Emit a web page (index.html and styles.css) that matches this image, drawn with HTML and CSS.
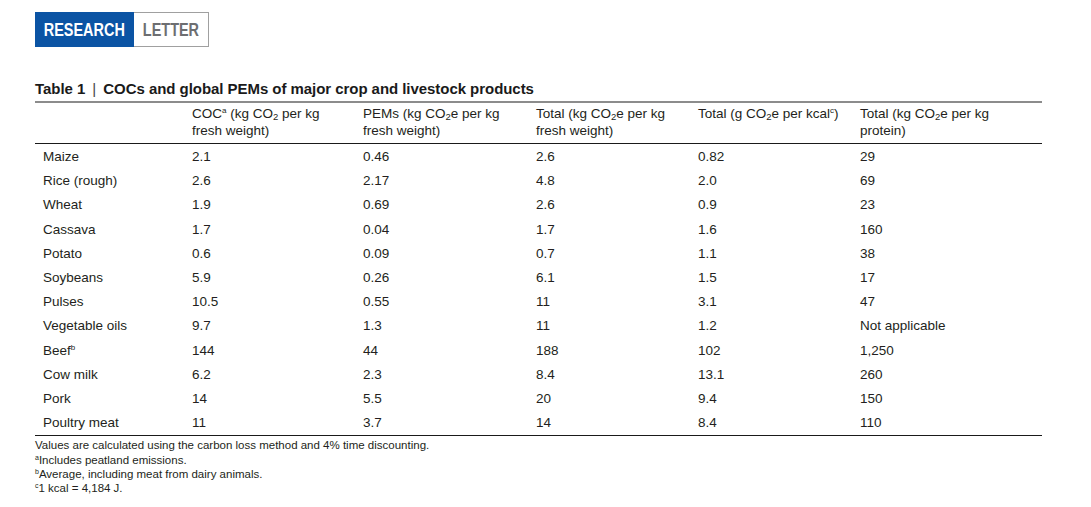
FILE: index.html
```html
<!DOCTYPE html>
<html>
<head>
<meta charset="utf-8">
<link rel="stylesheet" href="styles.css">
</head>
<body>
<div class="page">
  <div class="badge"><span class="badge-blue"><span class="cond">RESEARCH</span></span><span class="badge-white"><span class="cond">LETTER</span></span></div>
  <h1 class="title">Table 1 <span class="bar">|</span> COCs and global PEMs of major crop and livestock products</h1>
  <table class="data">
    <colgroup>
      <col class="c1"><col class="c2"><col class="c3"><col class="c4"><col class="c5"><col class="c6">
    </colgroup>
    <thead>
      <tr>
        <th></th>
        <th>COC<sup>a</sup> (kg CO<sub>2</sub> per kg<br>fresh weight)</th>
        <th>PEMs (kg CO<sub>2</sub>e per kg<br>fresh weight)</th>
        <th>Total (kg CO<sub>2</sub>e per kg<br>fresh weight)</th>
        <th>Total (g CO<sub>2</sub>e per kcal<sup>c</sup>)</th>
        <th>Total (kg CO<sub>2</sub>e per kg<br>protein)</th>
      </tr>
    </thead>
    <tbody>
      <tr><td>Maize</td><td>2.1</td><td>0.46</td><td>2.6</td><td>0.82</td><td>29</td></tr>
      <tr><td>Rice (rough)</td><td>2.6</td><td>2.17</td><td>4.8</td><td>2.0</td><td>69</td></tr>
      <tr><td>Wheat</td><td>1.9</td><td>0.69</td><td>2.6</td><td>0.9</td><td>23</td></tr>
      <tr><td>Cassava</td><td>1.7</td><td>0.04</td><td>1.7</td><td>1.6</td><td>160</td></tr>
      <tr><td>Potato</td><td>0.6</td><td>0.09</td><td>0.7</td><td>1.1</td><td>38</td></tr>
      <tr><td>Soybeans</td><td>5.9</td><td>0.26</td><td>6.1</td><td>1.5</td><td>17</td></tr>
      <tr><td>Pulses</td><td>10.5</td><td>0.55</td><td>11</td><td>3.1</td><td>47</td></tr>
      <tr><td>Vegetable oils</td><td>9.7</td><td>1.3</td><td>11</td><td>1.2</td><td>Not applicable</td></tr>
      <tr><td>Beef<sup>b</sup></td><td>144</td><td>44</td><td>188</td><td>102</td><td>1,250</td></tr>
      <tr><td>Cow milk</td><td>6.2</td><td>2.3</td><td>8.4</td><td>13.1</td><td>260</td></tr>
      <tr><td>Pork</td><td>14</td><td>5.5</td><td>20</td><td>9.4</td><td>150</td></tr>
      <tr><td>Poultry meat</td><td>11</td><td>3.7</td><td>14</td><td>8.4</td><td>110</td></tr>
    </tbody>
  </table>
  <div class="notes">
    <p>Values are calculated using the carbon loss method and 4% time discounting.</p>
    <p><sup>a</sup>Includes peatland emissions.</p>
    <p><sup>b</sup>Average, including meat from dairy animals.</p>
    <p><sup>c</sup>1 kcal = 4,184 J.</p>
  </div>
</div>
</body>
</html>
```

FILE: styles.css
```css
html, body {
  margin: 0;
  padding: 0;
  background: #ffffff;
}
body {
  font-family: "Liberation Sans", Arial, sans-serif;
  color: #231f20;
}
.page {
  padding: 12px 0 0 35px;
  width: 1007px;
}
.badge {
  display: flex;
  height: 35px;
  width: 174px;
}
.badge-blue {
  background: #0b54a4;
  flex: 0 0 99px;
  display: flex;
  align-items: center;
  justify-content: center;
  color: #ffffff;
  overflow: hidden;
}
.badge-white {
  flex: 0 0 75px;
  box-sizing: border-box;
  border: 1px solid #a0a0a0;
  border-left: none;
  display: flex;
  align-items: center;
  justify-content: center;
  color: #6d6e71;
  overflow: hidden;
}
.cond {
  display: inline-block;
  font-weight: bold;
  font-size: 19px;
  transform: scaleX(0.76);
  white-space: nowrap;
}
.title {
  margin: 33px 0 0 0;
  font-size: 15px;
  font-weight: bold;
  line-height: 18px;
  height: 21px;
  letter-spacing: -0.05px;
  color: #1a1a1a;
}
.title .bar {
  font-weight: normal;
  color: #444;
  padding: 0 3px;
}
.data {
  border-collapse: collapse;
  width: 1007px;
  table-layout: fixed;
  font-size: 13.5px;
}
.c1 { width: 149px; }
.c2 { width: 171px; }
.c3 { width: 173px; }
.c4 { width: 162px; }
.c5 { width: 162px; }
.c6 { width: 190px; }
.data thead tr {
  border-top: 2px solid #8c8c8c;
  border-bottom: 1px solid #1a1a1a;
}
.data th {
  font-weight: normal;
  text-align: left;
  vertical-align: top;
  padding: 2px 0 4px 8px;
  line-height: 17px;
  height: 32px;
}
.data td {
  padding: 0 0 0 8px;
  height: 24.2px;
  line-height: 16px;
  vertical-align: middle;
  white-space: nowrap;
}
.data tbody tr:first-child td {
  padding-top: 1px;
}
.data tbody tr:last-child {
  border-bottom: 1px solid #1a1a1a;
}
sup {
  font-size: 8px;
  line-height: 0;
  vertical-align: 5px;
}
sub {
  font-size: 9.5px;
  line-height: 0;
  vertical-align: -2px;
}
.notes {
  margin-top: 2px;
  font-size: 11.5px;
  line-height: 14.3px;
}
.notes p {
  margin: 0;
}
.notes sup {
  font-size: 7px;
  vertical-align: 4px;
}
```
